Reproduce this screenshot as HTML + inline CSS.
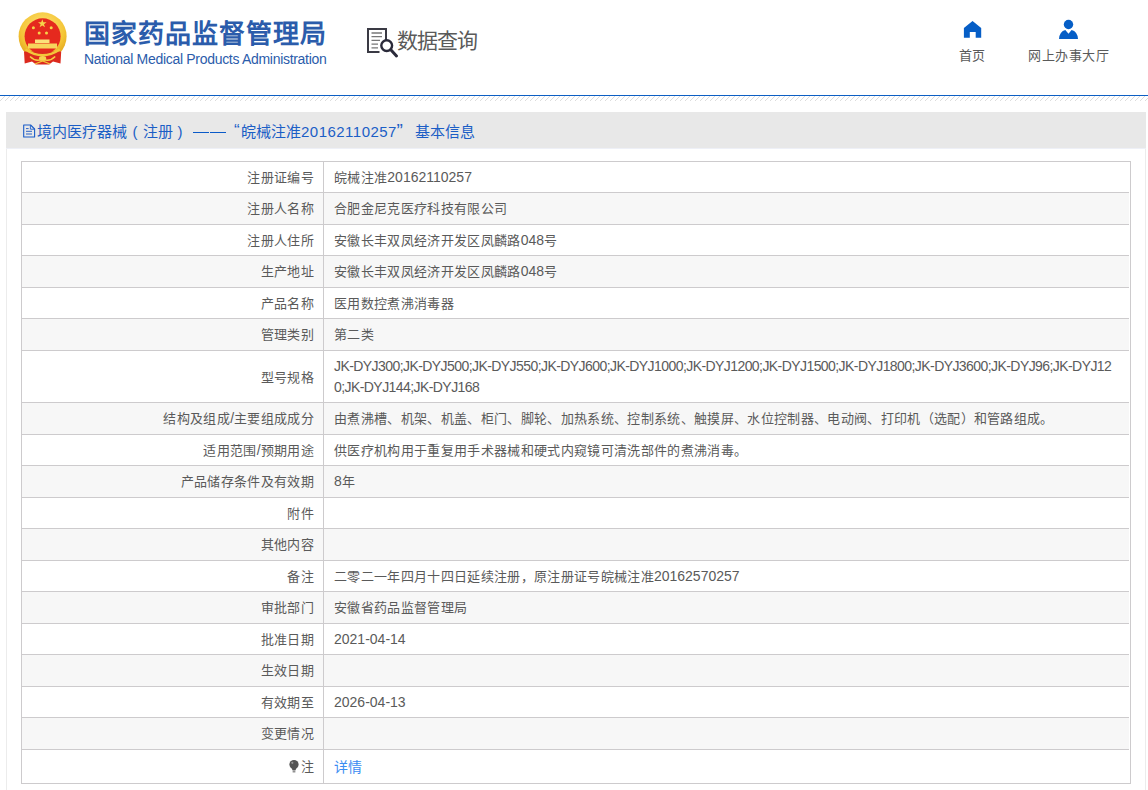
<!DOCTYPE html>
<html lang="zh-CN">
<head>
<meta charset="utf-8">
<style>
html,body{margin:0;padding:0;}
body{width:1148px;height:790px;overflow:hidden;background:#fff;position:relative;font-family:"Liberation Sans",sans-serif;}
.abs{position:absolute;}
#emblem{left:18px;top:12px;width:49px;height:53px;}
#title{left:84px;top:17px;font-size:26px;letter-spacing:1px;font-weight:bold;color:#2b5cab;white-space:nowrap;line-height:34px;}
#entitle{left:84px;top:50.5px;font-size:14px;letter-spacing:-0.3px;color:#2b5cab;white-space:nowrap;line-height:16px;}
#sjcx-icon{left:366px;top:27px;width:33px;height:32px;}
#sjcx{left:397px;top:25.5px;font-size:21px;letter-spacing:-1px;color:#5a5a5a;white-space:nowrap;line-height:30px;}
.nav{font-size:13px;color:#5a5a5a;white-space:nowrap;line-height:16px;}
#line{left:0;top:95px;width:1148px;height:1px;background:#0d5fc4;}
#stripes{left:0;top:96px;}
#panel{left:6px;top:112px;width:1140px;height:700px;background:#fff;border-left:1px solid #ececec;border-right:1px solid #ececec;box-sizing:border-box;}
#phead{left:6px;top:112px;width:1140px;height:36px;border-bottom:1px solid #eef0f7;background:#e8e8e8;}
#ptext{left:0;top:121.5px;font-size:15px;color:#1b5ec6;white-space:nowrap;line-height:20px;}
#tbl{left:21px;top:161px;width:1110px;}
.row{position:absolute;left:0;width:1108px;box-sizing:border-box;border-left:1px solid #cdcbcd;border-top:1px solid #cdcbcd;}
.top{position:absolute;left:0;top:0;width:1110px;height:1px;background:#cdcbcd;}
.rb{position:absolute;left:1109px;top:0;width:1px;background:#cdcbcd;}
.row.g{background:#f7f7f7;}
.row .k{position:absolute;left:0;top:0;width:302px;bottom:0;text-align:right;font-size:13px;letter-spacing:0.33px;color:#5a5a5a;box-sizing:border-box;padding-right:9px;padding-top:6px;line-height:20px;border-right:1px solid #cdcbcd;white-space:nowrap;}
.row .v{position:absolute;left:312px;right:0;top:0;bottom:0;font-size:13px;letter-spacing:0.33px;color:#5a5a5a;padding-top:6px;line-height:20px;white-space:nowrap;}
.l{font-size:14px;letter-spacing:0;line-height:1px;}
.jk{line-height:20.5px;margin-top:-1px;font-size:14px;letter-spacing:-0.57px;}

.k2{padding-top:10.5px;}
.bot{position:absolute;left:0;width:1110px;height:1px;background:#cdcbcd;}
.bulb{display:inline-block;width:10px;height:14px;margin-right:2px;vertical-align:-2px;}
.v a{color:#3b8df2;font-size:14px;position:relative;top:1px;}
</style>
</head>
<body>
<svg id="emblem" class="abs" viewBox="0 0 49 53">
  <defs>
    <radialGradient id="gold" cx="50%" cy="35%" r="65%">
      <stop offset="0" stop-color="#ffe680"/><stop offset="0.7" stop-color="#f4c536"/><stop offset="1" stop-color="#e0a21a"/>
    </radialGradient>
  </defs>
  <circle cx="24.6" cy="24.3" r="24" fill="url(#gold)"/>
  <circle cx="24.6" cy="24.3" r="18" fill="#e5291e"/>
  <polygon points="24.3,7.2 25.4,10.3 28.6,10.3 26,12.2 27,15.3 24.3,13.4 21.6,15.3 22.6,12.2 20,10.3 23.2,10.3" fill="#f6d34a"/>
  <circle cx="15.4" cy="15.7" r="1.5" fill="#f6d34a"/>
  <circle cx="33.2" cy="15.7" r="1.5" fill="#f6d34a"/>
  <circle cx="21.2" cy="20.9" r="1.5" fill="#f6d34a"/>
  <circle cx="28.5" cy="20.9" r="1.5" fill="#f6d34a"/>
  <rect x="17" y="27.5" width="14.5" height="3.5" fill="#fbe27a"/>
  <rect x="10" y="31.5" width="29" height="5" fill="#f7d55c"/>
  <path d="M6 39.5 L43.2 39.5 L42.5 51.5 L35 49.5 L31 52.5 L18 52.5 L14 49.5 L6.7 51.5 Z" fill="#dc2a1e"/>
  <path d="M7.5 37.5 Q24.6 49 41.7 37.5" fill="none" stroke="#f3c63a" stroke-width="2.6"/>
  <path d="M12 44.5 Q18 50.5 24.6 47 Q31.2 50.5 37.2 44.5" fill="none" stroke="#f5cf44" stroke-width="1.6"/>
  <ellipse cx="24.6" cy="46.5" rx="3.6" ry="2.4" fill="#f7d250"/>
  <path d="M17 52 L24.6 49 L32 52" fill="none" stroke="#f3c63a" stroke-width="1.3"/>
</svg>
<div id="title" class="abs">国家药品监督管理局</div>
<div id="entitle" class="abs">National Medical Products Administration</div>
<svg id="sjcx-icon" class="abs" viewBox="0 0 33 32">
  <path d="M13.5 25 H2 V2 H20 V13" fill="none" stroke="#3a3a44" stroke-width="2"/>
  <path d="M5.5 6 H16 M5.5 9.7 H16 M5.5 13.4 H14 M5.5 17.1 H12 M5.5 20.8 H12" stroke="#777" stroke-width="1.3"/>
  <circle cx="20.7" cy="18.6" r="5.4" fill="#fff" stroke="#2a2a3a" stroke-width="2.4"/>
  <path d="M24.8 22.8 L30.5 29" stroke="#2a2a3a" stroke-width="3" stroke-linecap="round"/>
</svg>
<div id="sjcx" class="abs">数据查询</div>

<svg class="abs" style="left:963px;top:20px;width:19px;height:19px" viewBox="0 0 19 19">
  <path d="M9.55 0.9 L18.2 7.9 V17.8 H12.7 V11.9 H6.8 V17.8 H0.9 V7.9 Z" fill="#065ec6"/>
</svg>
<div class="abs nav" style="left:959px;top:48px">首页</div>
<svg class="abs" style="left:1059px;top:19px;width:20px;height:20px" viewBox="0 0 20 20">
  <circle cx="9.5" cy="5.5" r="4.7" fill="#065ec6"/>
  <path d="M0 20 Q0.6 12.3 6.3 11 L9.5 14.8 L12.6 11 Q18.4 12.3 19 20 Z" fill="#065ec6"/>
</svg>
<div class="abs nav" style="left:1028px;top:48px;letter-spacing:0.5px">网上办事大厅</div>

<div id="line" class="abs"></div>
<svg id="stripes" class="abs" width="1148" height="5"><defs><pattern id="st" width="5" height="5" patternUnits="userSpaceOnUse"><path d="M-1 6 L6 -1" stroke="#dcdcdc" stroke-width="1"/></pattern></defs><rect width="1148" height="5" fill="url(#st)"/></svg>

<div id="panel" class="abs"></div>
<div id="phead" class="abs"></div>
<div id="ptext" class="abs">
<svg class="abs" style="left:22px;top:2.5px;width:14px;height:14px" viewBox="0 0 14 14"><path d="M1.7 1 H8.6 L12.6 5 V13 H1.7 Z" fill="none" stroke="#1a5cc8" stroke-width="1.1" stroke-linejoin="round"/><path d="M8.4 1.2 V5.2 H12.4" fill="none" stroke="#1a5cc8" stroke-width="0.9"/><path d="M4 4.6 H6.6 M4 7.3 H10 M4 10 H10" stroke="#2a62c6" stroke-width="1"/></svg>
<span class="abs" style="left:37px">境内医疗器械</span>
<span class="abs" style="left:132.5px">(</span>
<span class="abs" style="left:143px">注册</span>
<span class="abs" style="left:177.5px">)</span>
<div class="abs" style="left:193px;top:10.5px;width:16px;height:1px;background:#0a5ac8"></div><div class="abs" style="left:210px;top:10.5px;width:15.5px;height:1px;background:#0a5ac8"></div>
<span class="abs" style="left:234px;font-size:17px;top:-0.5px">&#8220;</span>
<span class="abs" style="left:241px">皖械注准<span style="letter-spacing:0.48px">20162110257</span></span>
<span class="abs" style="left:396.5px;font-size:19px;top:-1px">&#8221;</span>
<span class="abs" style="left:415px">基本信息</span>
</div>

<div id="tbl" class="abs">
 <div class="row" style="top:0px;height:31px"><div class="k">注册证编号</div><div class="v">皖械注准<span class="l">20162110257</span></div></div>
 <div class="row g" style="top:31px;height:32px"><div class="k">注册人名称</div><div class="v">合肥金尼克医疗科技有限公司</div></div>
 <div class="row" style="top:63px;height:31px"><div class="k">注册人住所</div><div class="v">安徽长丰双凤经济开发区凤麟路<span class="l">048</span>号</div></div>
 <div class="row g" style="top:94px;height:32px"><div class="k">生产地址</div><div class="v">安徽长丰双凤经济开发区凤麟路<span class="l">048</span>号</div></div>
 <div class="row" style="top:126px;height:31px"><div class="k">产品名称</div><div class="v">医用数控煮沸消毒器</div></div>
 <div class="row g" style="top:157px;height:32px"><div class="k">管理类别</div><div class="v">第二类</div></div>
 <div class="row" style="top:189px;height:52px"><div class="k"><div class="k2">型号规格</div></div><div class="v"><div class="jk">JK-DYJ300;JK-DYJ500;JK-DYJ550;JK-DYJ600;JK-DYJ1000;JK-DYJ1200;JK-DYJ1500;JK-DYJ1800;JK-DYJ3600;JK-DYJ96;JK-DYJ12<br>0;JK-DYJ144;JK-DYJ168</div></div></div>
 <div class="row g" style="top:241px;height:32px"><div class="k">结构及组成<span class="l">/</span>主要组成成分</div><div class="v">由煮沸槽、机架、机盖、柜门、脚轮、加热系统、控制系统、触摸屏、水位控制器、电动阀、打印机（选配）和管路组成。</div></div>
 <div class="row" style="top:273px;height:31px"><div class="k">适用范围<span class="l">/</span>预期用途</div><div class="v">供医疗机构用于重复用手术器械和硬式内窥镜可清洗部件的煮沸消毒。</div></div>
 <div class="row g" style="top:304px;height:32px"><div class="k">产品储存条件及有效期</div><div class="v"><span class="l">8</span>年</div></div>
 <div class="row" style="top:336px;height:31px"><div class="k">附件</div><div class="v"></div></div>
 <div class="row g" style="top:367px;height:32px"><div class="k">其他内容</div><div class="v"></div></div>
 <div class="row" style="top:399px;height:31px"><div class="k">备注</div><div class="v">二零二一年四月十四日延续注册，原注册证号皖械注准<span class="l">20162570257</span></div></div>
 <div class="row g" style="top:430px;height:32px"><div class="k">审批部门</div><div class="v">安徽省药品监督管理局</div></div>
 <div class="row" style="top:462px;height:31px"><div class="k">批准日期</div><div class="v"><span class="l">2021-04-14</span></div></div>
 <div class="row g" style="top:493px;height:32px"><div class="k">生效日期</div><div class="v"></div></div>
 <div class="row" style="top:525px;height:31px"><div class="k">有效期至</div><div class="v"><span class="l">2026-04-13</span></div></div>
 <div class="row g" style="top:556px;height:32px"><div class="k">变更情况</div><div class="v"></div></div>
 <div class="row" style="top:588px;height:34px"><div class="k"><div style="margin-top:1px"><svg class="bulb" viewBox="0 0 10 14"><circle cx="5" cy="5.5" r="4.6" fill="#555"/><path d="M2.6 9 L3.6 11.5 H6.4 L7.4 9 Z" fill="#555"/><rect x="3.6" y="12.2" width="2.8" height="1.2" fill="#777"/><circle cx="3.3" cy="3.8" r="1.1" fill="#999"/></svg>注</div></div><div class="v"><a>详情</a></div></div>
 <div class="bot" style="top:622px"></div>
 <div class="top"></div><div class="rb" style="height:622px"></div>
</div>
</body>
</html>
